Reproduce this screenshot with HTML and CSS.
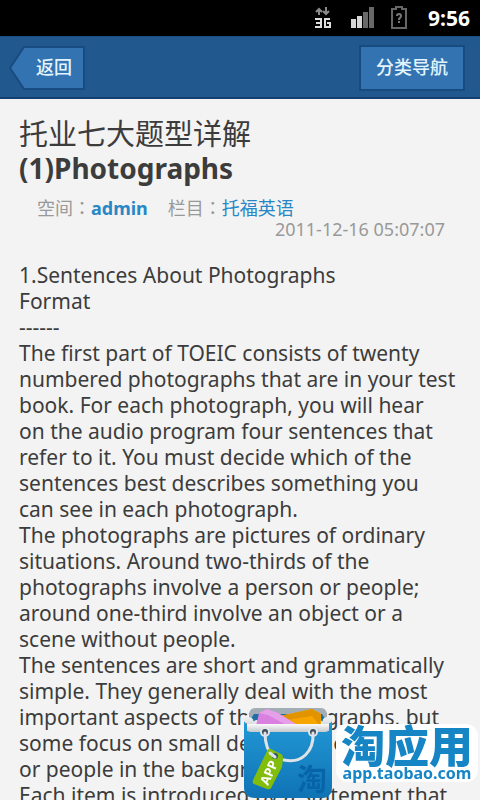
FILE: index.html
```
<!DOCTYPE html>
<html lang="zh-CN">
<head>
    <meta charset="UTF-8">
    <meta name="viewport" content="width=device-width, initial-scale=1.0">
    <title>托业七大题型详解(1)Photographs</title>
    <link rel="stylesheet" href="styles.css">
</head>
<body>
    <div class="status">
        <svg class="net" width="18" height="24" viewBox="0 0 18 24">
            <path d="M5 9V3M2 6l3-3 3 3M12 1v6M9 5l3 3 3-3" fill="none" stroke="#8a8a8a" stroke-width="2"/>
            <path d="M1 13h6v8H1M2 17h5M16 13h-5v8h5v-4h-3" fill="none" stroke="#dedede" stroke-width="2"/>
        </svg>
        <svg class="signal" width="26" height="24" viewBox="0 0 26 24">
            <path d="M1 13h5v9H1zM7 10h5v12H7z" fill="#d6d6d6"/>
            <path d="M13 6h5v16h-5zM19 1h5v21h-5z" fill="#686868"/>
        </svg>
        <svg class="battery" width="18" height="24" viewBox="0 0 18 24">
            <path d="M2 3h4V1h6v2h4v19H2z" fill="none" stroke="#666" stroke-width="2"/>
            <path d="M7 10q0-2 2-2t2 2q0 1-2 3v1M9 15v2" fill="none" stroke="#777" stroke-width="2"/>
        </svg>
        <span class="time">9:56</span>
    </div>
    <div class="nav">
        <button class="back">
            <svg width="78" height="46" viewBox="0 0 78 46">
                <path d="M16 2H76V44H16L2 23z" fill="#3373b1" stroke="#184b80" stroke-width="2"/>
            </svg>
            <span>返回</span>
        </button>
        <button class="sort">分类导航</button>
    </div>
    <div class="article">
        <h1><span>托业七大题型详解</span><br>(1)Photographs</h1>
        <div class="info" lang="zh-TW">
            <span>空间：<a href="#" class="user">admin</a></span>
            <span>栏目：<a href="#" lang="zh-CN">托福英语</a></span>
        </div>
        <div class="date">2011-12-16 05:07:07</div>
        <div class="content">
            1.Sentences About Photographs<br>
            Format<br>
            ------<br>
            The first part of TOEIC consists of twenty<br>
            numbered photographs that are in your test<br>
            book. For each photograph, you will hear<br>
            on the audio program four sentences that<br>
            refer to it. You must decide which of the<br>
            sentences best describes something you<br>
            can see in each photograph.<br>
            The photographs are pictures of ordinary<br>
            situations. Around two-thirds of the<br>
            photographs involve a person or people;<br>
            around one-third involve an object or a<br>
            scene without people.<br>
            The sentences are short and grammatically<br>
            simple. They generally deal with the most<br>
            important aspects of the photographs, but<br>
            some focus on small details, objects,<br>
            or people in the background.<br>
            Each item is introduced by a statement that
        </div>
    </div>
    <div class="logo">
        <svg width="92" height="94" viewBox="0 0 92 94">
            <defs>
                <linearGradient id="bag" x1="0" y1="0" x2="0" y2="1">
                    <stop offset="0" stop-color="#2298d6"/>
                    <stop offset="1" stop-color="#0f73b4"/>
                </linearGradient>
                <linearGradient id="rim" x1="0" y1="0" x2="0" y2="1">
                    <stop offset="0" stop-color="#fafafa"/>
                    <stop offset="1" stop-color="#c4c9cd"/>
                </linearGradient>
            </defs>
            <path d="M4 14L8 5Q9 2 14 2H78Q83 2 84 5L88 14z" fill="#a3adb5"/>
            <path d="M8 14L12 8H80L84 14V24H8z" fill="#1d6fa6"/>
            <path d="M10 16L14 14H78L82 16V22H10z" fill="#e3e6e8"/>
            <path d="M38 10L70 3 79 8V20H46z" fill="#f7a600"/>
            <path d="M70 3L79 8 78 20 70 10 46 14 38 10z" fill="#e29400"/>
            <path d="M14 20L17 7 25 3 36 7 57 20z" fill="#d980e0"/>
            <path d="M25 3L36 7 57 20H46L26 9 17 7z" fill="#e6a0ea"/>
            <path d="M2 15L6 20H86L90 15V81Q90 92 79 92H13Q2 92 2 81z" fill="url(#bag)"/>
            <path d="M1 14Q1 10 7 8L7 11Q13 12 11 18H81Q79 12 85 11L85 8Q91 10 91 14L87 18V25H5V18z" fill="url(#rim)"/>
            <path d="M5 18H87V22Q87 26 83 26H9Q5 26 5 22z" fill="url(#rim)"/>
            <text class="mark" x="55" y="84">淘</text>
            <circle cx="23" cy="26" r="5" fill="#dfe5e9"/>
            <circle cx="71" cy="26" r="5" fill="#dfe5e9"/>
            <circle cx="23" cy="26" r="3" fill="#3d4d5a"/>
            <circle cx="71" cy="26" r="3" fill="#3d4d5a"/>
            <path d="M23 27C23 38 26 46 32 51M42 54C60 58 72 45 71 27" fill="none" stroke="#dde3e8" stroke-width="3" stroke-linecap="round"/>
            <path d="M25 45Q26 42 29 43L39 48Q41 49 41 52L40 61 29 82Q28 84 25 83L12 78Q10 77 11 74z" fill="#82bd0b"/>
            <circle cx="33" cy="50" r="3" fill="#2c5961"/>
            <path d="M28 47L33 51" fill="none" stroke="#dde3e8" stroke-width="3" stroke-linecap="round"/>
            <text class="tag" transform="translate(26 80) rotate(-66)">APP</text>
        </svg>
        <div class="brand">
            <strong>淘应用</strong>
            <span>app.taobao.com</span>
        </div>
    </div>
</body>
</html>
```
FILE: styles.css
```
* {
    margin: 0;
    padding: 0;
    box-sizing: border-box;
}
body {
    height: 100vh;
    overflow: hidden;
    background-color: #f3f3f3;
    color: #3c3c3c;
    font-family: "Noto Sans", "Noto Sans CJK SC", sans-serif;
}
a {
    color: #2a87c5;
    text-decoration: none;
}
.status {
    display: flex;
    align-items: center;
    justify-content: flex-end;
    height: 36px;
    padding: 0 10px;
    background-color: #000;
}
.net {
    margin-right: 18px;
}
.signal {
    margin-right: 14px;
}
.battery {
    margin-right: 20px;
}
.time {
    color: #fff;
    font-size: 21px;
    font-weight: bold;
}
.nav {
    display: flex;
    justify-content: space-between;
    height: 63px;
    padding: 8px 15px 0 8px;
    background-color: #21598f;
    border-top: 1px solid #1c4e82;
    border-bottom: 2px solid #143f72;
}
.nav button {
    height: 46px;
    color: #e3f4ff;
    font-family: "Noto Sans CJK SC", sans-serif;
    font-size: 18px;
    font-weight: 500;
    cursor: pointer;
}
.back {
    display: grid;
    border: none;
    background: none;
}
.back svg,
.back span {
    grid-area: 1 / 1;
}
.back span {
    align-self: center;
    padding: 0 0 4px 14px;
}
.sort {
    width: 106px;
    padding-bottom: 4px;
    background-color: #3373b1;
    border: 2px solid #184b80;
}
.article {
    padding: 18px 19px 0;
}
h1 {
    font-size: 28px;
    line-height: 34px;
}
h1 span {
    font-size: 29px;
    font-weight: normal;
}
.info {
    display: flex;
    gap: 20px;
    padding: 12px 18px 0;
    color: #999;
    font-family: "Noto Sans", "Noto Sans CJK TC", sans-serif;
    font-size: 18px;
    line-height: 22px;
}
.user {
    font-weight: bold;
}
.date {
    padding-right: 16px;
    color: #999;
    font-size: 18px;
    line-height: 20px;
    text-align: right;
}
.content {
    padding-top: 23px;
    font-size: 21px;
    line-height: 26px;
    white-space: nowrap;
}
.logo {
    display: flex;
    align-items: flex-start;
    gap: 2px;
    position: fixed;
    right: 2px;
    bottom: 0;
    color: #1685c5;
}
.brand {
    display: flex;
    flex-direction: column;
    align-items: center;
    margin-top: 18px;
    padding: 0 5px;
    background-color: #fff;
    border-radius: 12px;
}
.brand strong {
    font-family: "Noto Sans CJK SC", sans-serif;
    font-size: 44px;
    font-weight: 900;
    line-height: 40px;
}
.brand span {
    font-size: 16px;
    font-weight: bold;
    line-height: 18px;
}
.mark {
    fill: #0864a8;
    font-family: "Noto Sans CJK SC", sans-serif;
    font-size: 30px;
    font-weight: bold;
}
.tag {
    fill: #fff;
    font-family: "Noto Sans", sans-serif;
    font-size: 13px;
    font-weight: bold;
}
```
